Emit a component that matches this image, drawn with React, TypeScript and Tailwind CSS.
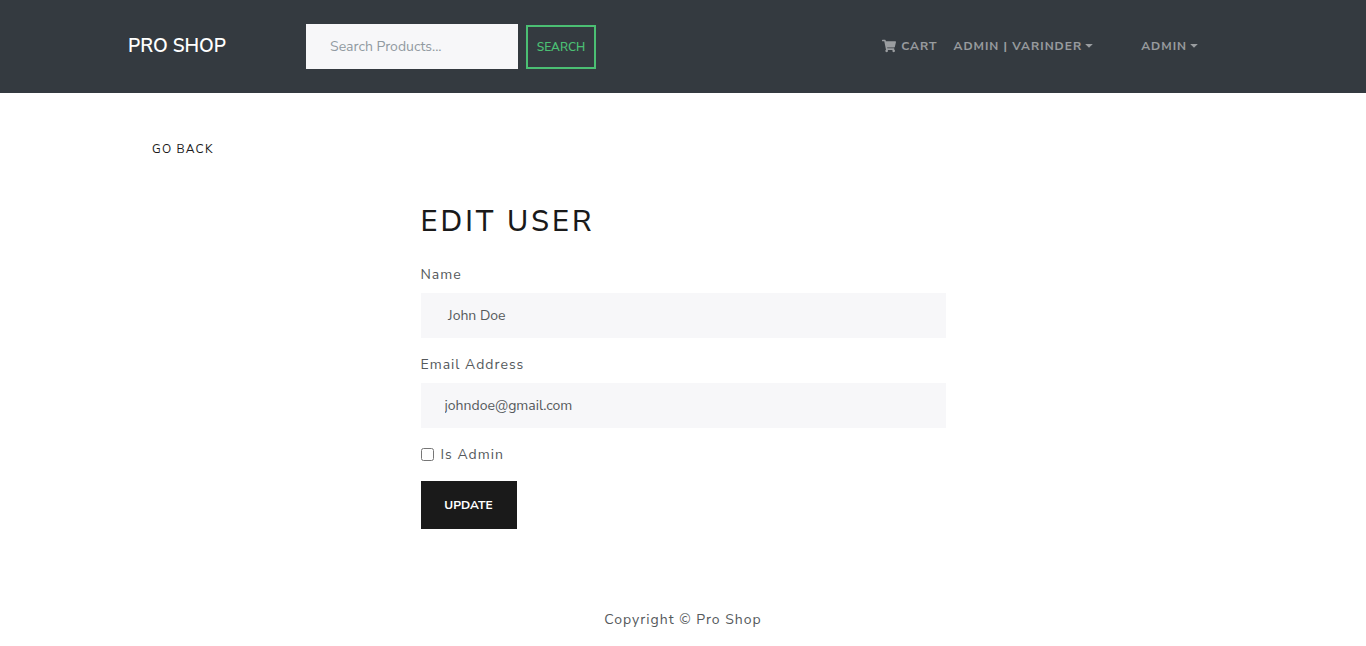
import { useState } from "react";
import { FaShoppingCart } from "react-icons/fa";

const field =
  "block h-[45px] w-full bg-[#f7f7f9] px-6 text-sm text-[#55595c] outline-none placeholder:text-[#919aa1]";

function Caret() {
  return (
    <svg className="ml-[3px] h-1 w-2" viewBox="0 0 8 4" fill="currentColor" aria-hidden="true">
      <path d="M0.2 0h7.6L4 3.8z" />
    </svg>
  );
}

function Header() {
  return (
    <header className="bg-[#343a40] py-6">
      <nav className="mx-auto flex max-w-[1140px] items-center px-[15px]">
        <a href="#home" className="mr-20 pb-0.5 text-[19px] leading-7 font-semibold text-white">
          PRO SHOP
        </a>
        <form className="flex items-center gap-2" onSubmit={(e) => e.preventDefault()}>
          <input
            type="text"
            aria-label="Search products"
            placeholder="Search Products..."
            className="h-[45px] w-[212px] bg-[#f7f7f9] px-6 text-sm text-[#55595c] outline-none placeholder:text-[#919aa1]"
          />
          <button
            type="submit"
            className="h-11 w-[70px] border-2 border-[#4bbf73] text-xs font-semibold text-[#4bbf73]"
          >
            SEARCH
          </button>
        </form>
        <div className="mr-10 ml-auto flex items-center pb-0.5 text-xs leading-5 font-bold text-white/50">
          <a href="#cart" className="flex items-center gap-[5px] tracking-[1px]">
            <FaShoppingCart className="h-3.5 w-3.5" />
            CART
          </a>
          <button type="button" className="ml-4 flex items-center tracking-[1px]">
            ADMIN | VARINDER
            <Caret />
          </button>
          <button type="button" className="ml-12 flex items-center tracking-[1px]">
            ADMIN
            <Caret />
          </button>
        </div>
      </nav>
    </header>
  );
}

export default function App() {
  const [name, setName] = useState(" John Doe");
  const [email, setEmail] = useState("johndoe@gmail.com");
  const [isAdmin, setIsAdmin] = useState(false);

  return (
    <div className="bg-white font-['Nunito_Sans','Nunito','Open_Sans',sans-serif] text-sm leading-[21px] text-[#55595c]">
      <Header />
      <main className="mx-auto max-w-[1140px] px-[15px] py-8">
        <a
          href="#users"
          className="inline-flex h-12 items-center px-6 align-top text-xs tracking-widest text-[#1a1a1a]"
        >
          GO BACK
        </a>
        <section className="mx-auto mt-[29px] mb-4 max-w-[525px]">
          <h1 className="mb-[22px] text-[29px] leading-10 font-medium tracking-[3px] text-[#1a1a1a]">
            EDIT USER
          </h1>
          <form className="flex flex-col gap-4" onSubmit={(e) => e.preventDefault()}>
            <div>
              <label htmlFor="name" className="mb-2 block tracking-[1px]">
                Name
              </label>
              <input
                id="name"
                type="text"
                value={name}
                onChange={(e) => setName(e.target.value)}
                className={field}
              />
            </div>
            <div>
              <label htmlFor="email" className="mb-2 block tracking-[1px]">
                Email Address
              </label>
              <input
                id="email"
                type="email"
                value={email}
                onChange={(e) => setEmail(e.target.value)}
                className={field}
              />
            </div>
            <div className="flex items-center">
              <input
                id="admin"
                type="checkbox"
                checked={isAdmin}
                onChange={(e) => setIsAdmin(e.target.checked)}
                className="mr-[7px] h-[13px] w-[13px]"
              />
              <label htmlFor="admin" className="tracking-[1px]">
                Is Admin
              </label>
            </div>
            <button
              type="submit"
              className="h-12 w-24 bg-[#1a1a1a] text-xs font-bold text-white"
            >
              UPDATE
            </button>
          </form>
        </section>
      </main>
      <footer className="pt-8 pb-4 text-center tracking-[1px]">Copyright © Pro Shop</footer>
    </div>
  );
}
